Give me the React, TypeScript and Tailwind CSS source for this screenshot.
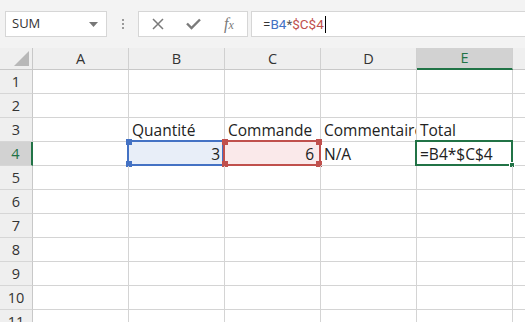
import React from "react";

const cols = ["A", "B", "C", "D", "E"];
const rows = [1, 2, 3, 4, 5, 6, 7, 8, 9, 10, 11];

function Cell({ r, c }: { r: number; c: string }) {
  let content: React.ReactNode = null;
  let cls = "";
  let right = false;
  let overlay: React.ReactNode = null;
  if (r === 3) {
    const t: Record<string, string> = { B: "Quantité", C: "Commande", D: "Commentaire", E: "Total" };
    if (t[c]) content = <span className="pl-[3px]">{t[c]}</span>;
  }
  if (r === 4) {
    if (c === "B") {
      cls = "bg-[#e8eef8]";
      right = true;
      content = <span className="pr-[4px]">3</span>;
      overlay = (
        <div className="absolute -left-[2px] -top-[2px] right-[0px] -bottom-[1px] border-2 border-[#4472c4] pointer-events-none">
          <div className="absolute -left-[3px] -top-[3px] w-[6px] h-[6px] bg-[#4472c4]" />
          <div className="absolute -left-[3px] -bottom-[3px] w-[6px] h-[6px] bg-[#4472c4]" />
        </div>
      );
    } else if (c === "C") {
      cls = "bg-[#fae9ea]";
      right = true;
      content = <span className="pr-[6px]">6</span>;
      overlay = (
        <div className="absolute -left-[2px] -top-[2px] right-[-1px] -bottom-[1px] border-2 border-[#c0504d] pointer-events-none">
          <div className="absolute -left-[3px] -top-[3px] w-[6px] h-[6px] bg-[#c0504d]" />
          <div className="absolute -right-[3px] -top-[3px] w-[6px] h-[6px] bg-[#c0504d]" />
          <div className="absolute -left-[3px] -bottom-[3px] w-[6px] h-[6px] bg-[#c0504d]" />
          <div className="absolute -right-[3px] -bottom-[3px] w-[6px] h-[6px] bg-[#c0504d]" />
        </div>
      );
    } else if (c === "D") {
      content = <span className="pl-[3px]">N/A</span>;
    } else if (c === "E") {
      content = <span className="pl-[3px]">=B4*$C$4</span>;
      overlay = (
        <div className="absolute -left-[2px] -top-[2px] right-[-1px] -bottom-[1px] border-2 border-[#217346] pointer-events-none">
          <div className="absolute -right-[4px] -bottom-[4px] w-[6px] h-[6px] bg-[#217346] border border-white" />
        </div>
      );
    }
  }
  return (
    <div className={`relative flex items-end h-[24px] border-r border-b border-[#d4d4d4] whitespace-nowrap ${cls}`}>
      <div className={`w-full min-w-0 flex overflow-hidden leading-[21px] ${right ? "justify-end" : ""}`}>{content}</div>
      {overlay}
    </div>
  );
}

export default function App() {
  return (
    <div
      className="w-[525px] h-[322px] overflow-hidden bg-white text-[#222]"
      style={{ fontFamily: "'Open Sans', 'Noto Sans', sans-serif" }}
    >
      {/* toolbar */}
      <div className="h-[48px] bg-[#f3f3f3] flex items-start pt-[11px] pl-[5px]">
        <div className="w-[102px] h-[26px] bg-white border border-[#d6d6d6] flex items-center justify-between pl-[6px] pr-[8px] text-[13px] text-[#333]">
          <span>SUM</span>
          <svg width="9" height="5" viewBox="0 0 9 5">
            <path d="M0 0 L9 0 L4.5 5 Z" fill="#777" />
          </svg>
        </div>
        <div className="w-[31px] h-[26px] flex flex-col items-center justify-center gap-[2px]">
          <div className="w-[2px] h-[2px] bg-[#9a9a9a]" />
          <div className="w-[2px] h-[2px] bg-[#9a9a9a]" />
          <div className="w-[2px] h-[2px] bg-[#9a9a9a]" />
        </div>
        <div className="w-[110px] h-[26px] bg-white border border-[#d6d6d6] flex items-center">
          <div className="w-[37px] flex justify-center">
            <svg width="12" height="12" viewBox="0 0 12 12">
              <path d="M1 1 L11 11 M11 1 L1 11" stroke="#7a7a7a" strokeWidth="1.5" />
            </svg>
          </div>
          <div className="w-[35px] flex justify-center">
            <svg width="15" height="12" viewBox="0 0 15 12">
              <path d="M1 5.5 L5.5 10 L14 1.5" stroke="#7a7a7a" strokeWidth="2.4" fill="none" />
            </svg>
          </div>
          <div className="w-[36px] flex justify-center text-[#7a7a7a] italic text-[16px] leading-none" style={{ fontFamily: "'Liberation Serif', serif" }}>
            <span>f<span className="text-[12px]">x</span></span>
          </div>
        </div>
        <div
          className="ml-[3px] flex-1 h-[26px] bg-white border border-[#d6d6d6] border-r-0 flex items-center pl-[11px] text-[13.5px]"
          style={{ fontFamily: "Roboto, sans-serif" }}
        >
          <span className="text-[#333]">=</span>
          <span className="text-[#4472c4]">B4</span>
          <span className="text-[#555]">*</span>
          <span className="text-[#c0504d]">$C$4</span>
          <span className="w-[1px] h-[17px] bg-black ml-[1px]" />
        </div>
      </div>
      {/* grid */}
      <div className="grid grid-cols-[33px_96px_96px_96px_96px_96px_1fr] text-[15.5px]">
        <div className="relative h-[22px] bg-[#efefef] border-r border-b border-[#c8c8c8]">
          <svg className="absolute right-[3px] bottom-[3px]" width="15" height="15" viewBox="0 0 15 15">
            <path d="M15 0 L15 15 L0 15 Z" fill="#b8b8b8" />
          </svg>
        </div>
        {cols.map((c) => (
          <div
            key={c}
            className={`h-[22px] flex items-center justify-center text-[14.5px] border-r border-[#d0d0d0] ${
              c === "E"
                ? "bg-[#d2d2d2] text-[#217346] border-b-2 border-b-[#217346]"
                : "bg-[#efefef] text-[#333] border-b border-b-[#c8c8c8]"
            }`}
          >
            {c}
          </div>
        ))}
        <div className="h-[22px] bg-[#efefef] border-b border-[#c8c8c8]" />
        {rows.map((r) => (
          <React.Fragment key={r}>
            <div
              className={`h-[24px] flex items-center justify-center pt-[1px] text-[14.5px] border-b border-[#d6d6d6] ${
                r === 4
                  ? "bg-[#d2d2d2] text-[#217346] border-r-2 border-r-[#217346]"
                  : "bg-[#efefef] text-[#333] border-r border-r-[#c8c8c8]"
              }`}
            >
              {r}
            </div>
            {cols.map((c) => (
              <Cell key={c} r={r} c={c} />
            ))}
            <div className="h-[24px] border-b border-[#d4d4d4]" />
          </React.Fragment>
        ))}
      </div>
    </div>
  );
}
